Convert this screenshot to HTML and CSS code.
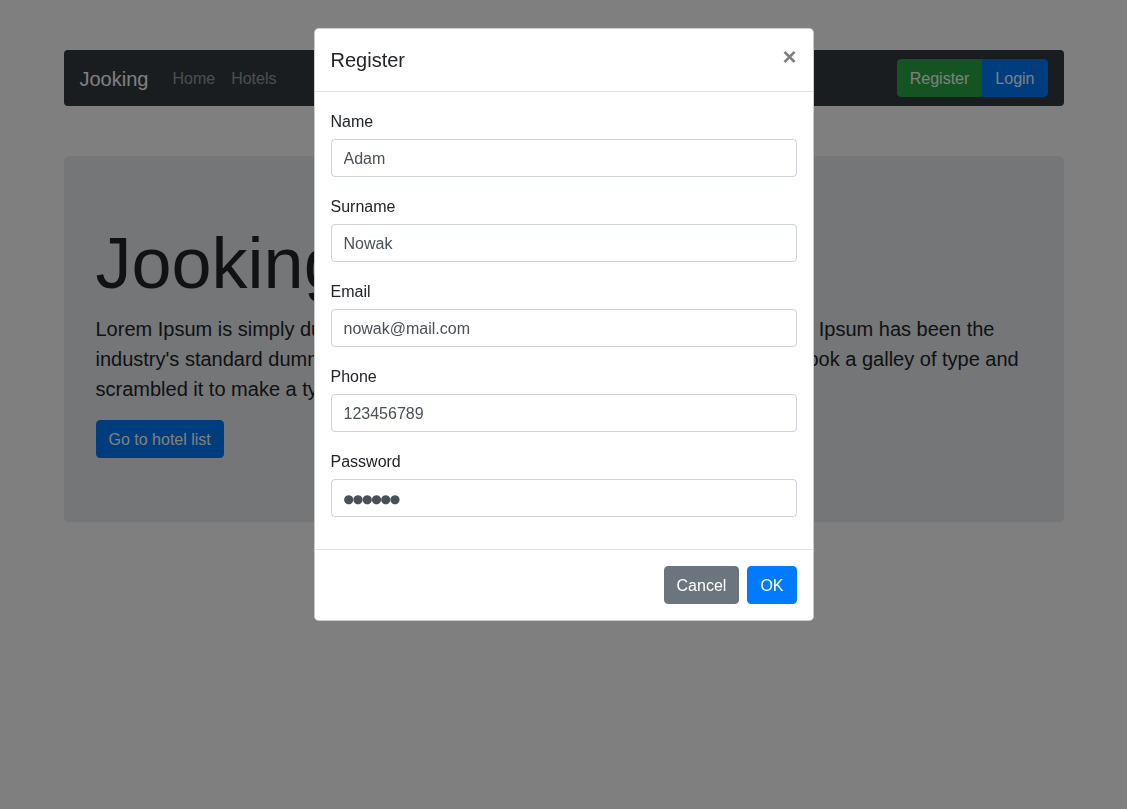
FILE: index.html
```html
<!DOCTYPE html>
<html lang="en">
<head>
<meta charset="utf-8">
<title>Jooking</title>
<link rel="stylesheet" href="styles.css">
</head>
<body>
<div class="container">
  <nav class="navbar">
    <div class="nav-left">
      <a class="brand" href="#">Jooking</a>
      <a class="nav-link" href="#">Home</a>
      <a class="nav-link" href="#">Hotels</a>
    </div>
    <div class="btn-group">
      <button class="btn btn-success">Register</button>
      <button class="btn btn-primary">Login</button>
    </div>
  </nav>

  <section class="jumbotron">
    <h1 class="display">Jooking</h1>
    <p class="lead">Lorem Ipsum is simply dummy text of the printing and typesetting industry. Lorem Ipsum has been the industry's standard dummy text ever since the 1500s, when an unknown printer took a galley of type and scrambled it to make a type specimen book.</p>
    <button class="btn btn-primary">Go to hotel list</button>
  </section>
</div>

<div class="backdrop"></div>

<div class="modal">
  <div class="modal-header">
    <h5 class="modal-title">Register</h5>
    <button class="close" aria-label="Close">&times;</button>
  </div>
  <div class="modal-body">
    <div class="form-group">
      <label>Name</label>
      <input class="form-control" type="text" value="Adam">
    </div>
    <div class="form-group">
      <label>Surname</label>
      <input class="form-control" type="text" value="Nowak">
    </div>
    <div class="form-group">
      <label>Email</label>
      <input class="form-control" type="email" value="nowak@mail.com">
    </div>
    <div class="form-group">
      <label>Phone</label>
      <input class="form-control" type="text" value="123456789">
    </div>
    <div class="form-group">
      <label>Password</label>
      <input class="form-control secret" type="text" value="●●●●●●">
    </div>
  </div>
  <div class="modal-footer">
    <button class="btn btn-secondary">Cancel</button>
    <button class="btn btn-primary">OK</button>
  </div>
</div>
</body>
</html>
```

FILE: styles.css
```css
* { box-sizing: border-box; }

html, body {
  margin: 0;
  padding: 0;
}

body {
  font-family: "Liberation Sans", Arial, sans-serif;
  font-size: 16px;
  line-height: 1.5;
  color: #212529;
  background: #fff;
}

.container {
  width: 1000px;
  margin: 0 auto;
  padding-top: 50px;
}

.navbar {
  display: flex;
  justify-content: space-between;
  align-items: center;
  background: #343a40;
  padding: 8px 16px;
  border-radius: 4px;
}

.nav-left {
  display: flex;
  align-items: center;
}

.brand {
  color: #fff;
  text-decoration: none;
  font-size: 20px;
  line-height: 30px;
  padding: 6px 0 4px;
  margin-right: 16px;
}

.nav-link {
  color: rgba(255, 255, 255, 0.5);
  text-decoration: none;
  padding: 9px 8px 7px;
}

.btn {
  display: inline-block;
  font-family: inherit;
  font-size: 16px;
  line-height: 24px;
  font-weight: 400;
  padding: 7px 12px 5px;
  border: 1px solid transparent;
  border-radius: 4px;
  color: #fff;
  cursor: pointer;
}

.btn-primary { background: #007bff; border-color: #007bff; }
.btn-success { background: #28a745; border-color: #28a745; }
.btn-secondary { background: #6c757d; border-color: #6c757d; }

.btn-group {
  display: flex;
}
.btn-group .btn:first-child {
  border-top-right-radius: 0;
  border-bottom-right-radius: 0;
}
.btn-group .btn:last-child {
  border-top-left-radius: 0;
  border-bottom-left-radius: 0;
}

.jumbotron {
  margin-top: 50px;
  background: #e9ecef;
  border-radius: 4.8px;
  padding: 64px 32px;
}

.display {
  margin: 0 0 8px;
  font-size: 72px;
  font-weight: 300;
  line-height: 1.2;
}

.lead {
  margin: 0 0 16px;
  font-size: 20px;
  font-weight: 300;
  line-height: 1.5;
}

.backdrop {
  position: fixed;
  inset: 0;
  background: rgba(0, 0, 0, 0.5);
}

.modal {
  position: fixed;
  top: 28px;
  left: 50%;
  transform: translateX(-50%);
  width: 500px;
  background: #fff;
  border: 1px solid rgba(0, 0, 0, 0.2);
  border-radius: 4.8px;
  display: flex;
  flex-direction: column;
}

.modal-header {
  display: flex;
  justify-content: space-between;
  align-items: flex-start;
  padding: 16px;
  border-bottom: 1px solid #dee2e6;
}

.modal-title {
  margin: 0;
  font-size: 20px;
  font-weight: 500;
  line-height: 1.5;
}

.close {
  background: transparent;
  border: 0;
  padding: 16px;
  margin: -16px -16px -16px auto;
  font-family: inherit;
  font-size: 24px;
  font-weight: 700;
  line-height: 1;
  color: #000;
  text-shadow: 0 1px 0 #fff;
  opacity: 0.5;
  cursor: pointer;
}

.modal-body {
  padding: 16px;
}

.form-group {
  margin-bottom: 16px;
}

.form-group label {
  display: block;
  line-height: 24px;
  padding-top: 2px;
  margin-bottom: 5px;
}

.form-control {
  display: block;
  width: 100%;
  height: 38px;
  padding: 7px 12px 5px;
  font-family: inherit;
  font-size: 16px;
  line-height: 24px;
  color: #495057;
  background: #fff;
  border: 1px solid #ced4da;
  border-radius: 4px;
}

.secret {
  font-family: "DejaVu Sans", "Liberation Sans", sans-serif;
  font-size: 12px;
  letter-spacing: -1.2px;
}

.modal-footer {
  display: flex;
  justify-content: flex-end;
  align-items: center;
  padding: 12px;
  border-top: 1px solid #dee2e6;
}

.modal-footer .btn {
  margin: 4px;
}
```
